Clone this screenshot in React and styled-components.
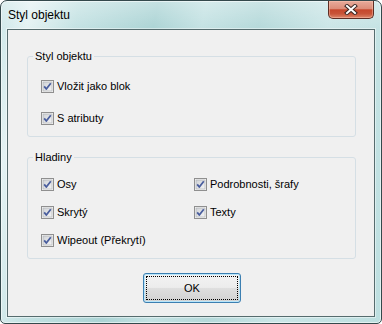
import React from "react";
import styled, { createGlobalStyle } from "styled-components";

const Global = createGlobalStyle`
  html, body { margin: 0; padding: 0; background: #ffffff; }
  body { font-family: "Liberation Sans", Arial, sans-serif; }
`;

const Window = styled.div`
  box-sizing: border-box;
  width: 382px;
  height: 324px;
  border: 1px solid #34494c;
  border-radius: 7px 7px 5px 5px;
  padding: 0 6px 6px 6px;
  display: flex;
  flex-direction: column;
  box-shadow: inset 0 0 0 1px rgba(255, 255, 255, 0.55);
  background:
    linear-gradient(to bottom, rgba(255, 255, 255, 0.3), rgba(255, 255, 255, 0) 28px),
    linear-gradient(100deg, #cde7e8 0%, #e4f2f3 7%, #c4e2e3 18%, #acd4d5 36%, #c4e2e3 47%, #b5d9da 60%, #cbe6e7 76%, #bddfe0 100%);
`;

const TitleBar = styled.div`
  height: 28px;
  display: flex;
  align-items: flex-start;
  justify-content: space-between;
`;

const Title = styled.div`
  font-family: "Liberation Sans", Arial, sans-serif;
  font-size: 12px;
  line-height: 16px;
  color: #000;
  padding: 6px 0 0 1px;
`;

const CloseButton = styled.div`
  box-sizing: border-box;
  width: 46px;
  height: 18px;
  margin-right: 1px;
  border: 1px solid #5d2d24;
  border-top: none;
  border-radius: 0 0 5px 5px;
  display: flex;
  align-items: center;
  justify-content: center;
  box-shadow: inset 0 0 0 1px rgba(255, 200, 180, 0.45);
  background: linear-gradient(
    to bottom,
    #e8ab9b 0%,
    #dc8d79 45%,
    #c6472c 52%,
    #c85438 75%,
    #dc866a 100%
  );
`;

const Client = styled.div`
  flex: 1;
  border: 1px solid #566c6e;
  background: #f0f0f0;
  box-shadow: 0 0 0 1px rgba(255, 255, 255, 0.45);
  padding: 20px 18px 13px 19px;
  display: flex;
  flex-direction: column;
`;

const Group = styled.fieldset`
  margin: 0 0 ${(p) => p.$gap || 0}px 0;
  border: 1px solid #d5dfe5;
  border-radius: 3px;
  padding: ${(p) => p.$pt}px 10px 11px 0;
  min-width: 0;
`;

const Legend = styled.legend`
  font-size: 11px;
  line-height: 13px;
  color: #000;
  padding: 0 2px;
  margin-left: 5px;
`;

const Stack = styled.div`
  display: flex;
  flex-direction: column;
  gap: ${(p) => p.$gap}px;
  padding-left: 13px;
`;

const Grid = styled.div`
  display: grid;
  grid-template-columns: 153px 1fr;
  row-gap: 15px;
  padding-left: 13px;
`;

const Row = styled.label`
  display: flex;
  align-items: center;
  height: 13px;
  font-size: 11px;
  line-height: 13px;
  color: #000;
  white-space: nowrap;
`;

const Box = styled.svg`
  width: 13px;
  height: 13px;
  margin-right: 3px;
  flex: none;
`;

const Footer = styled.div`
  display: flex;
  justify-content: center;
  margin-top: 14px;
`;

const Button = styled.button`
  position: relative;
  box-sizing: border-box;
  width: 98px;
  height: 30px;
  margin-left: 1px;
  border: 1px solid #3c7fb1;
  border-radius: 3px;
  font-family: "Liberation Sans", Arial, sans-serif;
  font-size: 11px;
  color: #000;
  box-shadow: inset 0 0 0 1px #b8e6fb;
  background: linear-gradient(to bottom, #f3f3f3 0%, #ececec 48%, #dedede 52%, #d2d2d2 100%);
  &::after {
    content: "";
    position: absolute;
    inset: 2px;
    border: 1px dotted #000;
  }
`;

let gid = 0;
function Check() {
  const id = React.useMemo(() => `cg${gid++}`, []);
  return (
    <Box viewBox="0 0 13 13">
      <defs>
        <linearGradient id={id} x1="0" y1="0" x2="1" y2="1">
          <stop offset="0" stopColor="#cfd2d6" />
          <stop offset="1" stopColor="#f5f5f5" />
        </linearGradient>
      </defs>
      <rect x="0.5" y="0.5" width="12" height="12" fill="#f4f4f4" stroke="#8f8f8f" />
      <rect x="2" y="2" width="9" height="9" fill={`url(#${id})`} stroke="#a9acb0" strokeWidth="0.6" />
      <path d="M3.2 6.4 L5.3 9 L9.8 3.2" fill="none" stroke="#4a5e9e" strokeWidth="1.8" strokeLinejoin="round" />
    </Box>
  );
}

function Item({ children }) {
  return (
    <Row>
      <Check />
      <span>{children}</span>
    </Row>
  );
}

export default function App() {
  return (
    <>
      <Global />
      <Window>
        <TitleBar>
          <Title>Styl objektu</Title>
          <CloseButton>
            <svg width="14" height="11" viewBox="0 0 14 11">
              <path d="M3 2 L11 9 M11 2 L3 9" stroke="#3b2622" strokeWidth="4" strokeLinecap="square" fill="none" />
              <path d="M3 2 L11 9 M11 2 L3 9" stroke="#ffffff" strokeWidth="2" strokeLinecap="square" fill="none" />
            </svg>
          </CloseButton>
        </TitleBar>
        <Client>
          <Group $pt={17} $gap={14}>
            <Legend>Styl objektu</Legend>
            <Stack $gap={19}>
              <Item>Vložit jako blok</Item>
              <Item>S atributy</Item>
            </Stack>
          </Group>
          <Group $pt={14}>
            <Legend>Hladiny</Legend>
            <Grid>
              <Item>Osy</Item>
              <Item>Podrobnosti, šrafy</Item>
              <Item>Skrytý</Item>
              <Item>Texty</Item>
              <Item>Wipeout (Překrytí)</Item>
            </Grid>
          </Group>
          <Footer>
            <Button>OK</Button>
          </Footer>
        </Client>
      </Window>
    </>
  );
}
